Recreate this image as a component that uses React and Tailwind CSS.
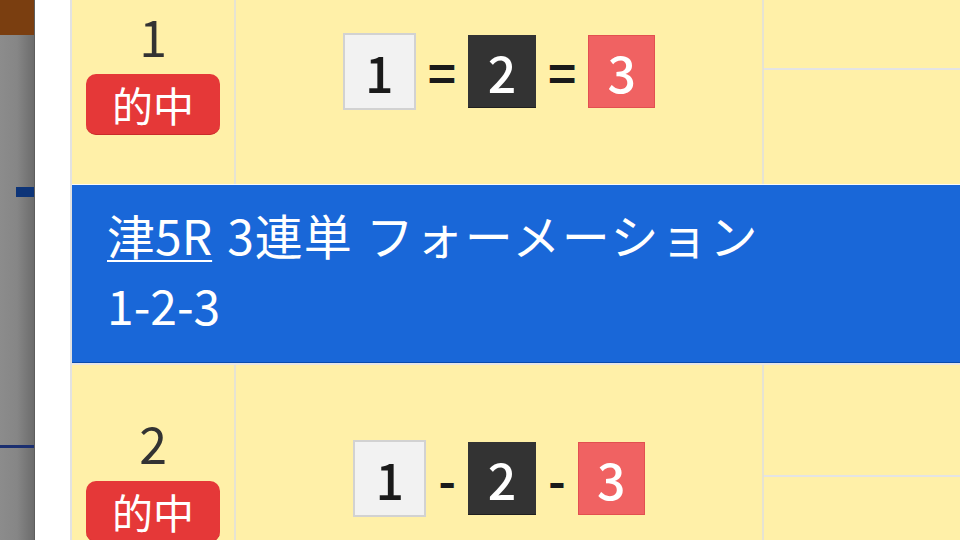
import React from 'react';

const font = { fontFamily: '"Noto Sans CJK JP", "Noto Sans", sans-serif' };

function NumBox({ n, kind }) {
  const styles = {
    white: 'w-[73px] h-[77px] bg-[#f2f2f2] border-2 border-[#d2d2d2] text-[#1a1a1a]',
    black: 'w-[68px] h-[73px] bg-[#333333] border-b border-[#1f1f1f] text-white',
    red: 'w-[67px] h-[73px] bg-[#f06262] border border-[#e25050] text-white',
  };
  return (
    <div className={`flex items-center justify-center text-[50px] font-medium leading-none ${styles[kind]}`}>{n}</div>
  );
}

function Combo({ sep }) {
  return (
    <div className="flex items-center justify-center gap-3">
      <NumBox n="1" kind="white" />
      <span className="text-[48px] font-bold leading-none text-[#1a1a1a]">{sep}</span>
      <NumBox n="2" kind="black" />
      <span className="text-[48px] font-bold leading-none text-[#1a1a1a]">{sep}</span>
      <NumBox n="3" kind="red" />
    </div>
  );
}

function ResultRow({ rank, sep }) {
  return (
    <div className="flex h-[226px] bg-[#fff0a8]">
      <div className="w-[164px] border-r-2 border-[#e6e3d2] flex flex-col items-center justify-center pt-[3px]">
        <div className="text-[50px] leading-[50px] text-[#333]">{rank}</div>
        <div className="mt-[14px] w-[134px] h-[61px] rounded-[10px] bg-[#e53838] border-b border-[#c92b2b] flex items-center justify-center text-white text-[41px] leading-none">的中</div>
      </div>
      <div className="w-[528px] border-r-2 border-[#e6e3d2] flex items-center justify-center">
        <Combo sep={sep} />
      </div>
      <div className="flex-1 flex flex-col">
        <div className="h-[112px] border-b-2 border-[#e4e4e4]" />
        <div className="flex-1" />
      </div>
    </div>
  );
}

export default function App() {
  return (
    <div className="flex w-[960px] h-[540px] overflow-hidden bg-white" style={font}>
      <div className="w-[35px] flex flex-col border-r border-[#5e5e5e]">
        <div className="h-[35px] bg-[#7a3e10]" />
        <div className="flex-1 flex flex-col bg-gradient-to-r from-[#8c8c8c] via-[#868686] to-[#6c6c6c]">
          <div className="h-[152px]" />
          <div className="ml-[16px] h-[10px] bg-[#0d3478]" />
          <div className="h-[248px]" />
          <div className="h-[3px] bg-[#1b2f70]" />
        </div>
      </div>
      <div className="w-[35px] bg-white" />
      <div className="flex-1 border-l-2 border-[#e2e2e2] overflow-hidden">
        <div className="-mt-[42px]">
          <ResultRow rank="1" sep="=" />
          <div className="h-px bg-[#fafafa]" />
          <div className="h-[178px] bg-[#1967d8] border-b border-[#0b4cad] pt-[14px] pl-[35px] text-white text-[48px] leading-[70px]">
            <div className="flex">
              <span className="underline decoration-2 underline-offset-[5px]">津5R</span>
              <span className="ml-[15px] tracking-[1px]">3連単</span>
              <span className="ml-[13px] tracking-[1.5px]">フォーメーション</span>
            </div>
            <div>1-2-3</div>
          </div>
          <div className="h-[2px] bg-[#e6e6e6]" />
          <ResultRow rank="2" sep="-" />
        </div>
      </div>
    </div>
  );
}
